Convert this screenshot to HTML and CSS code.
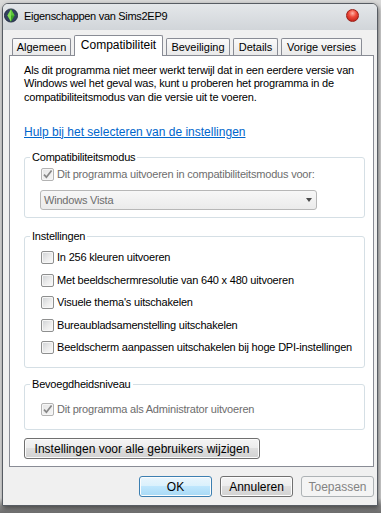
FILE: index.html
```html
<!DOCTYPE html>
<html lang="nl">
<head>
    <meta charset="UTF-8">
    <meta name="viewport" content="width=device-width, initial-scale=1.0">
    <title>Eigenschappen van Sims2EP9</title>
    <link rel="stylesheet" href="styles.css">
</head>
<body>
    <div class="window">
        <div class="titlebar">
            <svg class="app-icon" viewBox="0 0 14 15" width="14" height="15">
                <circle cx="7" cy="7.5" r="6.6" fill="#33415f" stroke="#1c2438" stroke-width="0.8"/>
                <polygon points="7,1.2 10.6,7.5 7,13.8 3.4,7.5" fill="#3aa526"/>
                <polygon points="7,1.2 7,13.8 3.4,7.5" fill="#86dc5a"/>
                <polygon points="7,1.2 10.6,7.5 7,7.5" fill="#5cc63a"/>
            </svg>
            <span class="title">Eigenschappen van Sims2EP9</span>
            <span class="close"></span>
        </div>

        <div class="client">
            <div class="tabs">
                <div class="tab tab-general">Algemeen</div>
                <div class="tab tab-compat active">Compatibiliteit</div>
                <div class="tab tab-security">Beveiliging</div>
                <div class="tab tab-details">Details</div>
                <div class="tab tab-previous">Vorige versies</div>
            </div>

            <div class="panel">
                <p class="intro">Als dit programma niet meer werkt terwijl dat in een eerdere versie van Windows wel het geval was, kunt u proberen het programma in de compatibiliteitsmodus van die versie uit te voeren.</p>
                <a class="help" href="#">Hulp bij het selecteren van de instellingen</a>

                <fieldset class="group group-mode">
                    <legend>Compatibiliteitsmodus</legend>
                    <label class="option disabled">
                        <span class="check checked">
                            <svg viewBox="0 0 11 11" width="11" height="11"><path d="M2 5.6 L4.4 8.2 L9.6 1.4" fill="none" stroke="#878787" stroke-width="1.7"/></svg>
                        </span>
                        Dit programma uitvoeren in compatibiliteitsmodus voor:
                    </label>
                    <div class="combo">
                        <span>Windows Vista</span>
                        <span class="arrow"></span>
                    </div>
                </fieldset>

                <fieldset class="group group-settings">
                    <legend>Instellingen</legend>
                    <div class="options">
                        <label class="option"><span class="check"></span>In 256 kleuren uitvoeren</label>
                        <label class="option"><span class="check"></span>Met beeldschermresolutie van 640 x 480 uitvoeren</label>
                        <label class="option"><span class="check"></span>Visuele thema's uitschakelen</label>
                        <label class="option"><span class="check"></span>Bureaubladsamenstelling uitschakelen</label>
                        <label class="option"><span class="check"></span>Beeldscherm aanpassen uitschakelen bij hoge DPI-instellingen</label>
                    </div>
                </fieldset>

                <fieldset class="group group-level">
                    <legend>Bevoegdheidsniveau</legend>
                    <label class="option disabled">
                        <span class="check checked">
                            <svg viewBox="0 0 11 11" width="11" height="11"><path d="M2 5.6 L4.4 8.2 L9.6 1.4" fill="none" stroke="#878787" stroke-width="1.7"/></svg>
                        </span>
                        Dit programma als Administrator uitvoeren
                    </label>
                </fieldset>

                <button class="btn btn-wide" type="button">Instellingen voor alle gebruikers wijzigen</button>
            </div>

            <div class="actions">
                <button class="btn btn-default" type="button">OK</button>
                <button class="btn" type="button">Annuleren</button>
                <button class="btn" type="button" disabled>Toepassen</button>
            </div>
        </div>
    </div>
</body>
</html>
```

FILE: styles.css
```css
/* General Styles */
* {
    box-sizing: border-box;
}

body {
    margin: 0;
    width: 381px;
    height: 513px;
    overflow: hidden;
    background: linear-gradient(#dadada 0, #dadada 498px, #8c8c8c 506px, #6e6e6e 513px);
    font-family: "Liberation Sans", Arial, sans-serif;
    font-size: 11px;
    letter-spacing: -0.2px;
    color: #000;
}

/* Window frame */
.window {
    width: 376px;
    height: 503px;
    margin: 3px 0 0 2px;
    border: 1px solid #575c63;
    border-radius: 6px 6px 0 0;
    background: #f0f0f0;
    display: flex;
    flex-direction: column;
    box-shadow: 1px 2px 5px rgba(0, 0, 0, 0.5);
}

.titlebar {
    height: 26px;
    padding: 0 0 3px 1px;
    display: flex;
    align-items: center;
    background: linear-gradient(#e4e7ea, #d1d5d9);
    border-radius: 5px 5px 0 0;
}

.app-icon {
    flex: none;
}

.title {
    margin-left: 6px;
    letter-spacing: -0.3px;
}

.close {
    margin-left: auto;
    margin-right: 18px;
    width: 13px;
    height: 13px;
    border-radius: 50%;
    border: 1px solid #9a1f17;
    background: radial-gradient(circle at 50% 30%, #ffb3a6 0, #ee4a3a 40%, #b3140d 100%);
}

.client {
    flex: 1;
    padding: 5px 3px 0 6px;
}

/* Tabs */
.tabs {
    display: flex;
    align-items: flex-end;
    gap: 3px;
    height: 20px;
    padding-left: 3px;
}

.tab {
    height: 17px;
    border: 1px solid #898c95;
    border-bottom: 0;
    border-radius: 2px 2px 0 0;
    background: linear-gradient(#fafafa, #e9e9e9);
    line-height: 16px;
    letter-spacing: 0;
    text-align: center;
    white-space: nowrap;
}

.tab-general { width: 59px; }
.tab-compat { width: 89px; }
.tab-security { width: 64px; }
.tab-details { width: 45px; }
.tab-previous { width: 81px; }

.tab.active {
    position: relative;
    z-index: 1;
    height: 21px;
    margin-bottom: -1px;
    padding-bottom: 2px;
    background: #fff;
    font-size: 12px;
    line-height: 18px;
}

/* Tab page */
.panel {
    background: #fff;
    border: 1px solid #898c95;
    padding: 8px 8px 7px 14px;
}

.intro {
    margin: 0;
    line-height: 13.3px;
}

.help {
    display: block;
    width: max-content;
    margin-top: 22px;
    font-size: 12px;
    letter-spacing: 0;
    line-height: 13.3px;
    color: #0066cc;
}

/* Group boxes */
.group {
    margin: 12px 0 0;
    padding: 4px 7px 7px 5px;
    border: 1px solid #d5dfe5;
    border-radius: 3px;
    min-width: 0;
}

.group legend {
    padding: 0 2px;
    line-height: 13px;
}

.group-settings {
    margin-top: 12px;
    padding-top: 8px;
    padding-bottom: 13px;
}

.group-level {
    margin-top: 10px;
    padding-top: 12px;
    padding-bottom: 13px;
}

.options {
    display: flex;
    flex-direction: column;
    gap: 9.5px;
}

.option {
    display: flex;
    align-items: center;
    height: 13px;
    margin-left: 11px;
    line-height: 13px;
    white-space: nowrap;
}

.option.disabled {
    color: #6d6d6d;
}

/* Checkboxes */
.check {
    flex: none;
    display: flex;
    align-items: center;
    justify-content: center;
    width: 13px;
    height: 13px;
    margin-right: 3px;
    border: 1px solid #8e8f8f;
    border-radius: 2px;
    background: linear-gradient(135deg, #cdd0d3 0%, #ececec 55%, #fbfbfb 100%);
    box-shadow: inset 0 0 0 1px #f6f6f6;
}

.check.checked {
    border-color: #b3b3b3;
    background: linear-gradient(135deg, #e6e6e6 0%, #f5f5f5 100%);
}

/* Combo box */
.combo {
    display: flex;
    align-items: center;
    justify-content: space-between;
    width: 277px;
    height: 20px;
    margin: 9px 0 0 10px;
    padding: 0 4px 0 3px;
    border: 1px solid #b7b7b7;
    border-radius: 3px;
    background: linear-gradient(#f7f7f7, #ebebeb);
    color: #6d6d6d;
}

.arrow {
    width: 0;
    height: 0;
    border-left: 3.5px solid transparent;
    border-right: 3.5px solid transparent;
    border-top: 4px solid #4b4b4b;
}

/* Buttons */
.btn {
    height: 21px;
    padding: 0;
    border: 1px solid #707070;
    border-radius: 3px;
    background: linear-gradient(#f4f4f4 0%, #ececec 50%, #dedede 50%, #d2d2d2 100%);
    box-shadow: inset 0 0 0 1px #fcfcfc;
    font-family: inherit;
    font-size: 12px;
    letter-spacing: 0;
    color: #000;
}

.btn-wide {
    display: block;
    width: 236px;
    margin-top: 8px;
}

.btn-default {
    border-color: #3c7fb1;
    background: linear-gradient(#eaf6fd 0%, #d9f0fc 50%, #bee6fd 50%, #a7d9f5 100%);
}

.btn:disabled {
    border-color: #adb2b5;
    background: #f4f4f4;
    box-shadow: none;
    color: #838383;
}

.actions {
    display: flex;
    justify-content: flex-end;
    gap: 8px;
    margin-top: 9px;
}

.actions .btn {
    width: 73px;
}
```
